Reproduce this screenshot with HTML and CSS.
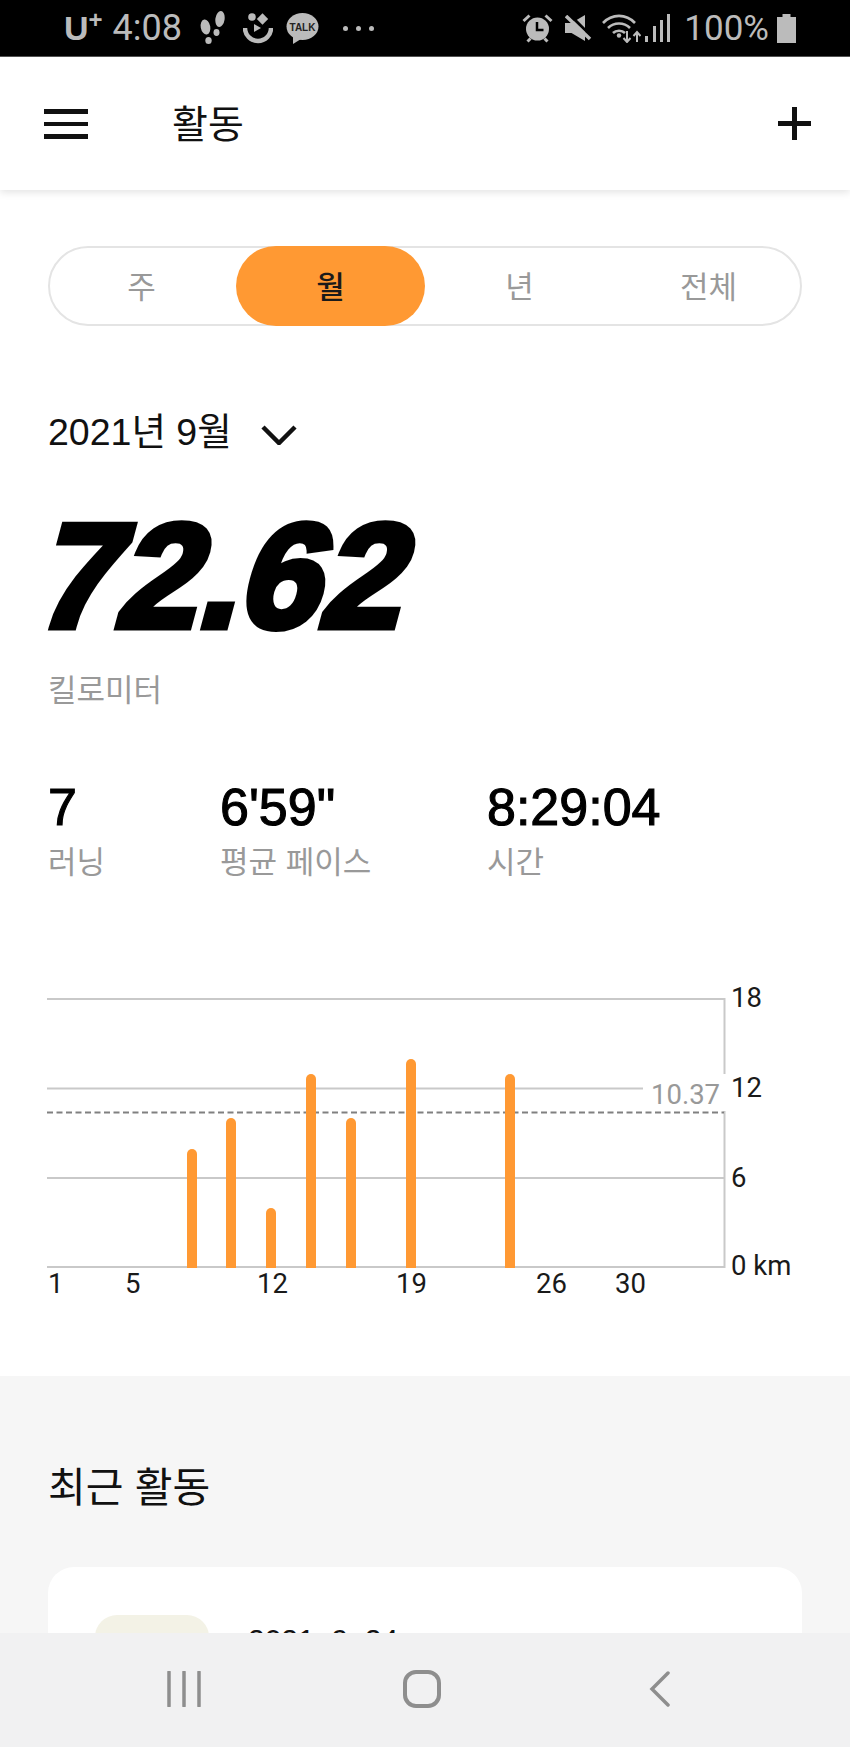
FILE: index.html
```html
<!DOCTYPE html>
<html lang="ko">
<head>
  <meta charset="UTF-8" />
  <meta name="viewport" content="width=device-width, initial-scale=1.0"/>
  <title>활동</title>
  <link rel="stylesheet" href="styles.css">
</head>
<body>
  <div class="phone">
    <div class="statusbar">
      <div class="status-left">
        <span class="carrier">U<sup>+</sup></span>
        <span class="clock">4:08</span>
        <svg class="ic ic-steps" width="28" height="34" viewBox="0 0 28 34"><g fill="#bbb"><ellipse cx="6.500" cy="16" rx="4.800" ry="7.500" transform="rotate(-10 6.500 16)"/><ellipse cx="9.500" cy="29.500" rx="3.200" ry="3.500"/><ellipse cx="21" cy="8" rx="4.600" ry="8" transform="rotate(8 21 8)"/><ellipse cx="17.500" cy="21.500" rx="3" ry="3.400"/></g></svg>
        <svg class="ic ic-smile" width="30" height="32" viewBox="0 0 30 32"><g fill="#bbb"><circle cx="9" cy="5" r="3.800"/><rect x="15.500" y="3" width="8" height="8" transform="rotate(45 19.500 7)"/><path d="M11 12l7 4-7 4z"/></g><path d="M2 16a13 13 0 0 0 26 0" fill="none" stroke="#bbb" stroke-width="4.500"/></svg>
        <svg class="ic ic-talk" width="33" height="31" viewBox="0 0 33 31"><ellipse cx="16.500" cy="13.500" rx="16" ry="13.500" fill="#bbb"/><path d="M7 23v8l8-5z" fill="#bbb"/><text class="talk" x="16.500" y="17.500" text-anchor="middle">TALK</text></svg>
        <div class="dots"><i></i><i></i><i></i></div>
      </div>
      <div class="status-right">
        <svg class="ic ic-alarm" width="31" height="29" viewBox="0 0 31 29"><circle cx="15.500" cy="15" r="11.500" fill="#bbb"/><path d="M15 8v8h6.500" fill="none" stroke="#000" stroke-width="2.500"/><path d="M1.500 7l6-5.500M29.500 7l-6-5.500M5.500 27.500l3-3M25.500 27.500l-3-3" stroke="#bbb" stroke-width="3" fill="none"/></svg>
        <svg class="ic ic-mute" width="27" height="27" viewBox="0 0 27 27"><path d="M0 8h6.500L20 0v26L6.500 18H0z" fill="#bbb"/><path d="M3 -2l24 24" stroke="#000" stroke-width="3"/><path d="M1 1l24 23" stroke="#bbb" stroke-width="3.500"/></svg>
        <svg class="ic ic-wifi" width="39" height="29" viewBox="0 0 39 29"><g fill="none" stroke="#bbb" stroke-width="2.600"><path d="M1 9c9-9.500 23-9.500 32 0"/><path d="M6 14c6-6 16-6 22 0"/><path d="M11 19c3-3 9-3 12 0"/></g><circle cx="17" cy="21.500" r="2.200" fill="#bbb"/><path d="M25 17v11m-3.500-4l3.500 4 3.500-4M35 28v-10m-3.500 4l3.500-4 3.500 4" fill="none" stroke="#bbb" stroke-width="2"/></svg>
        <svg class="ic ic-signal" width="25" height="28" viewBox="0 0 25 28"><g fill="#bbb"><rect x="0" y="22" width="3" height="6"/><rect x="8" y="12" width="3" height="16"/><rect x="15" y="6" width="3" height="22"/><rect x="22" y="0" width="3" height="28"/></g></svg>
        <span class="clock battery-pct">100%</span>
        <svg class="ic ic-battery" width="21" height="29" viewBox="0 0 21 29"><path d="M6.500 0h8v3H20v26H1V3h5.500z" fill="#bbb"/></svg>
      </div>
    </div>

    <header class="appbar">
      <svg width="44" height="30" viewBox="0 0 44 30"><g fill="#111"><rect y="0" width="44" height="5"/><rect y="13" width="44" height="4"/><rect y="25" width="44" height="5"/></g></svg>
      <h1 class="title">활동</h1>
      <svg class="plus" width="33" height="33" viewBox="0 0 33 33"><path d="M16.500 0v33M0 16.500h33" stroke="#111" stroke-width="5"/></svg>
    </header>

    <main class="content">
      <div class="tabs">
        <span class="tab">주</span>
        <span class="tab active">월</span>
        <span class="tab">년</span>
        <span class="tab">전체</span>
      </div>

      <div class="period">
        <span>2021년 9월</span>
        <svg class="chevron" width="36" height="20" viewBox="0 0 36 20"><path d="M2 2l16 16L34 2" fill="none" stroke="#111" stroke-width="4.500"/></svg>
      </div>

      <div class="distance"><span>72.62</span></div>
      <div class="unit">킬로미터</div>

      <div class="stats">
        <div class="stat stat-runs"><b>7</b><span>러닝</span></div>
        <div class="stat stat-pace"><b>6'59"</b><span>평균 페이스</span></div>
        <div class="stat"><b>8:29:04</b><span>시간</span></div>
      </div>

      <svg class="chart" width="850" height="320" viewBox="0 980 850 320">
        <g class="grid">
          <path d="M47 998H724.500V1266H47"/>
          <path d="M47 1087.500H724"/>
          <path d="M47 1177H724"/>
        </g>
        <rect x="643" y="1073" width="84" height="37" fill="#fff"/>
        <path class="avg" d="M47 1111.500H724"/>
        <g class="bars">
          <path d="M187 1267V1153a5 5 0 0 1 10 0V1267z"/>
          <path d="M226 1267V1122a5 5 0 0 1 10 0V1267z"/>
          <path d="M266 1267V1212a5 5 0 0 1 10 0V1267z"/>
          <path d="M306 1267V1078a5 5 0 0 1 10 0V1267z"/>
          <path d="M346 1267V1122a5 5 0 0 1 10 0V1267z"/>
          <path d="M406 1267V1063a5 5 0 0 1 10 0V1267z"/>
          <path d="M505 1267V1078a5 5 0 0 1 10 0V1267z"/>
        </g>
        <text class="avg-label" x="651" y="1103">10.37</text>
        <g class="axis">
          <text x="731" y="1006">18</text>
          <text x="731" y="1096">12</text>
          <text x="731" y="1186">6</text>
          <text x="731" y="1274">0 km</text>
          <text x="48" y="1292">1</text>
          <text x="125" y="1292">5</text>
          <text x="257" y="1292">12</text>
          <text x="396" y="1292">19</text>
          <text x="536" y="1292">26</text>
          <text x="615" y="1292">30</text>
        </g>
      </svg>

      <section class="recent">
        <h2>최근 활동</h2>
        <div class="card">
          <div class="thumb"></div>
          <div class="card-date">2021. 9. 24.</div>
        </div>
      </section>
    </main>

    <nav class="navbar">
      <svg width="36" height="36" viewBox="0 0 36 36"><path d="M3 1v34M18 1v34M33 1v34" stroke="#8e8e8e" stroke-width="3.500" stroke-linecap="round"/></svg>
      <svg width="40" height="38" viewBox="0 0 40 38"><rect x="3" y="2" width="34" height="34" rx="11" fill="none" stroke="#8e8e8e" stroke-width="4"/></svg>
      <svg width="22" height="36" viewBox="0 0 22 36"><path d="M19 2L3 18l16 16" fill="none" stroke="#8e8e8e" stroke-width="3.500" stroke-linecap="round"/></svg>
    </nav>
  </div>
</body>
</html>
```

FILE: styles.css
```css
* {
  box-sizing: border-box;
}
body {
  margin: 0;
  background: #fff;
  color: #111;
  font-family: "Liberation Sans", "Noto Sans CJK KR", sans-serif;
}
.phone {
  width: 850px;
  height: 1747px;
  display: flex;
  flex-direction: column;
  overflow: hidden;
}

.statusbar {
  height: 57px;
  flex: none;
  background: #000;
  color: #bbb;
  border-bottom: 1px solid #555;
  display: flex;
  justify-content: space-between;
  align-items: center;
  padding: 0 53px 0 64px;
  font-family: Roboto, sans-serif;
}
.status-left, .status-right {
  display: flex;
  align-items: center;
}
.carrier {
  font-family: "Liberation Sans", sans-serif;
  font-size: 34px;
  font-weight: 700;
  margin-right: 10px;
}
.carrier sup {
  font-size: 24px;
  line-height: 0;
  vertical-align: 12px;
}
.clock {
  font-size: 36px;
}
.ic-steps {
  margin-left: 17px;
}
.ic-smile {
  margin-left: 16px;
}
.ic-talk {
  margin-left: 13px;
}
.ic-mute {
  margin-left: 12px;
}
.ic-wifi {
  margin-left: 10px;
}
.ic-signal {
  margin-left: 4px;
}
.battery-pct {
  font-size: 35px;
  margin-left: 14px;
}
.ic-battery {
  margin-left: 7px;
}
.talk {
  font: 700 10px "Liberation Sans", sans-serif;
  fill: #222;
}
.dots {
  display: flex;
  gap: 8px;
  margin-left: 24px;
}
.dots i {
  width: 5px;
  height: 5px;
  border-radius: 50%;
  background: #bbb;
}

.appbar {
  height: 133px;
  flex: none;
  background: #fff;
  display: flex;
  align-items: center;
  padding: 0 39px 0 44px;
  box-shadow: 0 2px 8px rgba(0,0,0,0.12);
  position: relative;
}
.title {
  margin: -6px 0 0 84px;
  font-size: 39px;
  font-weight: 400;
}
.plus {
  margin-left: auto;
}

.content {
  flex: 1;
  min-height: 0;
  overflow: hidden;
  display: flex;
  flex-direction: column;
}

.tabs {
  margin: 56px 48px 0;
  height: 80px;
  flex: none;
  display: grid;
  grid-template-columns: repeat(4, 189px);
  justify-content: center;
  border: 2px solid #e4e4e4;
  border-radius: 40px;
}
.tab {
  display: flex;
  align-items: center;
  justify-content: center;
  font-size: 31px;
  padding-bottom: 4px;
  color: #999;
}
.tab.active {
  margin: -2px 0;
  background: #ff9933;
  color: #1a1a1a;
  font-weight: 500;
  border-radius: 40px;
}

.period {
  margin: 84px 48px 0;
  display: flex;
  align-items: center;
  gap: 29px;
  font-size: 37.5px;
  line-height: 44px;
  flex: none;
}
.chevron {
  margin-top: 6px;
}

.distance {
  margin: 53px 0 0 48px;
  height: 138px;
  flex: none;
  display: flex;
  align-items: center;
  color: #000;
  font-size: 148px;
  font-weight: 700;
  line-height: 138px;
}
.distance span {
  display: block;
  transform: skewX(-15deg) scaleX(0.99);
  transform-origin: left center;
  -webkit-text-stroke: 7px #000;
  margin-left: -3px;
}
.unit {
  margin: 24px 48px 0;
  font-size: 31px;
  line-height: 44px;
  color: #999;
  flex: none;
}

.stats {
  margin: 62px 48px 0;
  display: flex;
  flex: none;
}
.stat {
  display: flex;
  flex-direction: column;
}
.stat-runs {
  width: 172px;
}
.stat-pace {
  width: 267px;
}
.stat b {
  font-size: 52px;
  line-height: 64px;
  font-weight: 400;
  -webkit-text-stroke: 1.1px #000;
  color: #000;
}
.stat span {
  margin-top: 4px;
  font-size: 31px;
  line-height: 40px;
  color: #999;
}

.chart {
  display: block;
  flex: none;
  margin-top: 98px;
}
.grid path {
  fill: none;
  stroke: #c9c9c9;
  stroke-width: 2;
}
.avg {
  fill: none;
  stroke: #808080;
  stroke-width: 2;
  stroke-dasharray: 6 3.500;
}
.bars path {
  fill: #ff9933;
}
.axis text, .avg-label {
  font-family: Roboto, sans-serif;
  font-size: 27.5px;
}
.axis text {
  fill: #1a1a1a;
}
.avg-label {
  fill: #999;
}

.recent {
  flex: 1;
  background: #f6f6f6;
  padding: 0 48px;
  margin-top: 75px;
}
.recent h2 {
  margin: 84px 0 0;
  font-size: 41px;
  font-weight: 400;
  line-height: 56px;
}
.card {
  margin-top: 51px;
  height: 300px;
  background: #fff;
  border-radius: 26px;
  padding: 48px 47px;
  display: flex;
  gap: 39px;
}
.thumb {
  width: 114px;
  height: 114px;
  background: #f3f2e6;
  border-radius: 22px;
}
.card-date {
  font-size: 30px;
  line-height: 36px;
  margin-top: 7px;
}

.navbar {
  height: 114px;
  flex: none;
  background: #f1f1f2;
  display: grid;
  grid-template-columns: repeat(3, 238px);
  justify-items: center;
  align-items: center;
  padding: 0 0 2px 65px;
}
```
